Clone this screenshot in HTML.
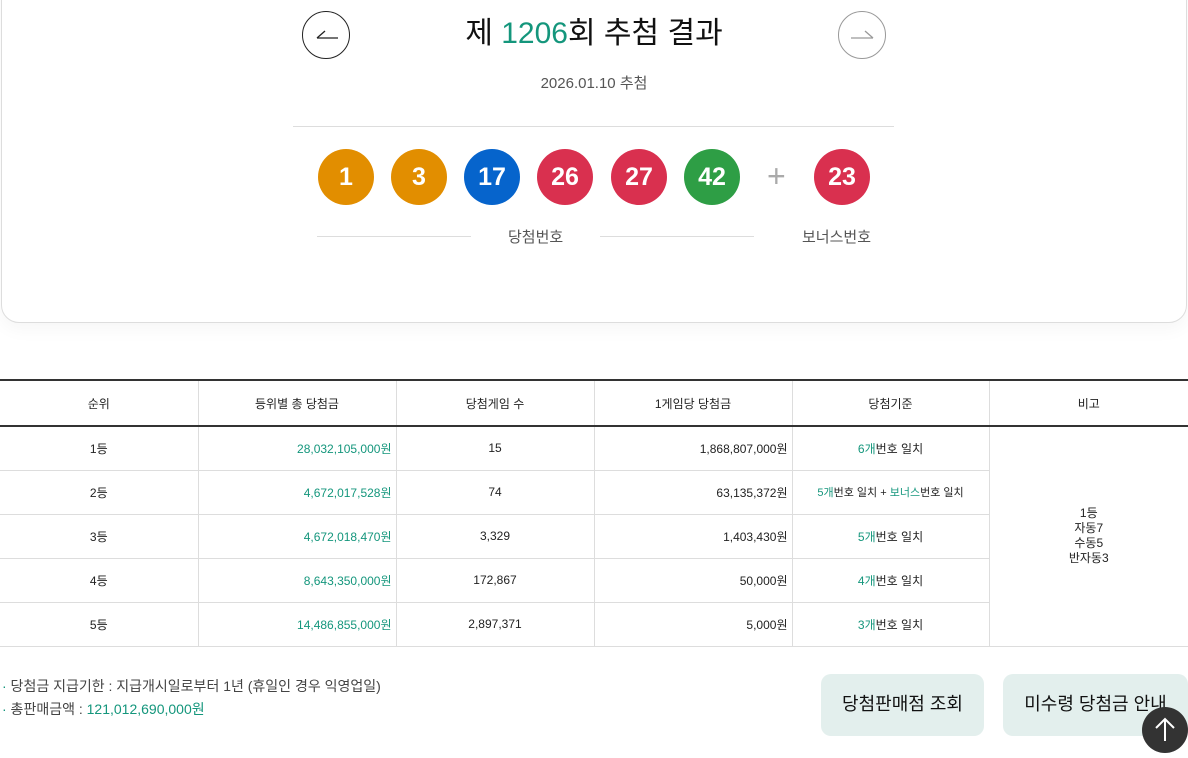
<!DOCTYPE html>
<html><head><meta charset="utf-8"><style>
*{margin:0;padding:0;box-sizing:border-box}
body{width:1188px;height:741px;overflow:hidden;background:#fff;font-family:"Liberation Sans","Noto Sans CJK KR",sans-serif;color:#222;position:relative}
.card{position:absolute;left:1px;top:-20px;width:1186px;height:343px;border:1px solid #ddd;border-radius:0 0 18px 18px;box-shadow:0 6px 18px rgba(0,0,0,0.04)}
.title{position:absolute;left:0;width:1188px;top:8px;text-align:center;font-size:30px;color:#111}
.title span{color:#14967c}
.nav{position:absolute;top:11px;width:48px;height:48px;border-radius:50%;border:1px solid #222}
.date{position:absolute;left:0;width:1188px;top:72px;text-align:center;font-size:15px;color:#555}
.hr{position:absolute;left:293px;width:601px;top:126px;border-top:1px solid #ddd}
.ball{position:absolute;top:149px;width:56px;height:56px;border-radius:50%;color:#fff;font-weight:bold;font-size:25px;text-align:center;line-height:56px}
.o{background:#e28e00}.b{background:#0664cc}.r{background:#d9304f}.g{background:#2e9e45}
.plus{position:absolute;left:767px;top:158px;font-size:32px;color:#aaa}
.lbl{position:absolute;top:226px;font-size:15px;color:#555}
.ln{position:absolute;top:236px;border-top:1px solid #ddd}
table{position:absolute;left:0;top:379px;width:1188px;border-collapse:collapse;font-size:12px}
th{height:46px;font-weight:normal;border-top:2px solid #333;border-bottom:2px solid #333;border-left:1px solid #ddd}
td{height:44px;border-bottom:1px solid #ddd;border-left:1px solid #ddd;text-align:center;vertical-align:middle}
th:first-child,td:first-child{border-left:none}
.gr{color:#14967c}.rt{text-align:right;padding-right:4px}
.info{position:absolute;left:2px;font-size:14px;color:#444}
.btn{position:absolute;top:674px;height:62px;background:#e3efed;border-radius:10px;font-size:18px;text-align:center;line-height:60px;color:#111}
.top{position:absolute;left:1142px;top:707px;width:46px;height:46px;border-radius:50%;background:#333}
</style></head><body>
<div class="card"></div>
<div class="nav" style="left:302px"><svg width="48" height="48"><path d="M14 26 L35 26 M14 26 L22 19" stroke="#222" stroke-width="1.3" fill="none"/></svg></div>
<div class="nav" style="left:838px;border-color:#999"><svg width="48" height="48"><path d="M12 26 L34 26 M34 26 L26 19" stroke="#999" stroke-width="1.3" fill="none"/></svg></div>
<div class="title">제 <span>1206</span>회 추첨 결과</div>
<div class="date">2026.01.10 추첨</div>
<div class="hr"></div>
<div class="ball o" style="left:318px">1</div>
<div class="ball o" style="left:391px">3</div>
<div class="ball b" style="left:464px">17</div>
<div class="ball r" style="left:537px">26</div>
<div class="ball r" style="left:611px">27</div>
<div class="ball g" style="left:684px">42</div>
<div class="plus">+</div>
<div class="ball r" style="left:814px">23</div>
<div class="ln" style="left:317px;width:154px"></div>
<div class="lbl" style="left:508px">당첨번호</div>
<div class="ln" style="left:600px;width:154px"></div>
<div class="lbl" style="left:802px">보너스번호</div>
<table>
<tr><th style="width:198px">순위</th><th style="width:198px">등위별 총 당첨금</th><th style="width:198px">당첨게임 수</th><th style="width:198px">1게임당 당첨금</th><th style="width:197px">당첨기준</th><th>비고</th></tr>
<tr><td>1등</td><td class="gr rt">28,032,105,000원</td><td>15</td><td class="rt">1,868,807,000원</td><td><span class="gr">6개</span>번호 일치</td><td rowspan="5" style="line-height:15px">1등<br>자동7<br>수동5<br>반자동3</td></tr>
<tr><td>2등</td><td class="gr rt">4,672,017,528원</td><td>74</td><td class="rt">63,135,372원</td><td style="font-size:11px"><span class="gr">5개</span>번호 일치 + <span class="gr">보너스</span>번호 일치</td></tr>
<tr><td>3등</td><td class="gr rt">4,672,018,470원</td><td>3,329</td><td class="rt">1,403,430원</td><td><span class="gr">5개</span>번호 일치</td></tr>
<tr><td>4등</td><td class="gr rt">8,643,350,000원</td><td>172,867</td><td class="rt">50,000원</td><td><span class="gr">4개</span>번호 일치</td></tr>
<tr><td>5등</td><td class="gr rt">14,486,855,000원</td><td>2,897,371</td><td class="rt">5,000원</td><td><span class="gr">3개</span>번호 일치</td></tr>
</table>
<div class="info" style="top:676px"><span class="gr">·</span> 당첨금 지급기한 : 지급개시일로부터 1년 (휴일인 경우 익영업일)</div>
<div class="info" style="top:699px"><span class="gr">·</span> 총판매금액 : <span class="gr">121,012,690,000원</span></div>
<div class="btn" style="left:821px;width:163px">당첨판매점 조회</div>
<div class="btn" style="left:1003px;width:185px">미수령 당첨금 안내</div>
<div class="top"><svg width="46" height="46"><path d="M23 12 L23 34 M14 21 L23 12 L32 21" stroke="#fff" stroke-width="2" fill="none"/></svg></div>
</body></html>
